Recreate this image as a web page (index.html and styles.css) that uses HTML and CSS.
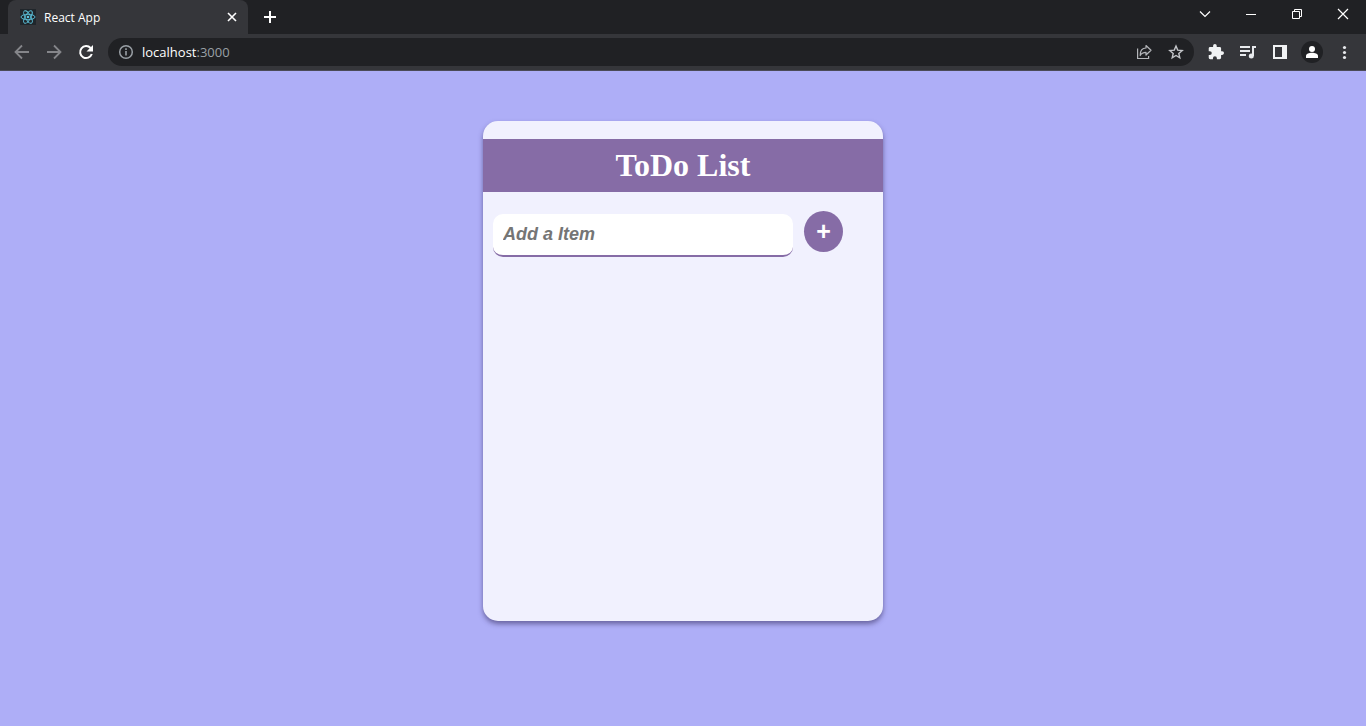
FILE: index.html
```html
<!DOCTYPE html>
<html lang="en">
<head>
<meta charset="utf-8">
<title>React App</title>
<link rel="stylesheet" href="styles.css">
</head>
<body>
<header class="browser">
  <div class="tab-strip">
    <div class="tab">
      <svg class="favicon" width="16" height="16" viewBox="0 0 16 16" fill="none" stroke="#5cc3dc" stroke-width=".9">
        <rect width="16" height="16" fill="#20262b" stroke="none"/>
        <ellipse cx="8" cy="8" rx="7" ry="2.7"/>
        <ellipse cx="8" cy="8" rx="7" ry="2.7" transform="rotate(60 8 8)"/>
        <ellipse cx="8" cy="8" rx="7" ry="2.7" transform="rotate(120 8 8)"/>
        <circle cx="8" cy="8" r="1.3" fill="#5cc3dc" stroke="none"/>
      </svg>
      <span class="tab-title">React App</span>
      <button class="tab-close" aria-label="Close tab"><svg width="16" height="16" viewBox="0 0 16 16" stroke="#fff" stroke-width="1.6"><path d="M4 4l8 8M12 4l-8 8"/></svg></button>
    </div>
    <button class="new-tab" aria-label="New tab"><svg width="16" height="16" viewBox="0 0 16 16" stroke="#fff" stroke-width="2"><path d="M2 8h12M8 2v12"/></svg></button>
    <div class="window-controls">
      <button class="window-button" aria-label="Search tabs"><svg width="12" height="12" viewBox="0 0 12 12" fill="none" stroke="#fff" stroke-width="1.200"><path d="M1 3.500l5 5 5-5"/></svg></button>
      <button class="window-button" aria-label="Minimize"><svg width="12" height="12" viewBox="0 0 12 12" stroke="#fff"><path d="M1 6.500h10"/></svg></button>
      <button class="window-button" aria-label="Restore"><svg width="12" height="12" viewBox="0 0 12 12" fill="none" stroke="#fff"><path d="M1.500 3.500h7v7h-7zM3.500 3.500v-2h7v7h-2"/></svg></button>
      <button class="window-button" aria-label="Close window"><svg width="12" height="12" viewBox="0 0 12 12" stroke="#fff" stroke-width="1.200"><path d="M1 1l10 10M11 1L1 11"/></svg></button>
    </div>
  </div>
  <div class="toolbar">
    <button class="tool" aria-label="Back"><svg width="16" height="16" viewBox="0 0 16 16" fill="none" stroke="#85868a" stroke-width="1.800"><path d="M15 8H2M8 1.500L1.500 8 8 14.500"/></svg></button>
    <button class="tool" aria-label="Forward"><svg width="16" height="16" viewBox="0 0 16 16" fill="none" stroke="#85868a" stroke-width="1.800"><path d="M1 8h13M8 1.500L14.500 8 8 14.500"/></svg></button>
    <button class="tool" aria-label="Reload"><svg width="16" height="16" viewBox="0 0 16 16" fill="none" stroke="#fff" stroke-width="2"><path d="M13.800 10A6 6 0 1 1 12.600 4"/><path d="M15 1v6.500H8.500z" fill="#fff" stroke="none"/></svg></button>
    <div class="address-bar">
      <svg width="16" height="16" viewBox="0 0 16 16" fill="none" stroke="#9aa0a6" stroke-width="1.500"><circle cx="8" cy="8" r="6.300"/><path d="M8 7v4.500M8 4.300v1.600" stroke-width="1.600"/></svg>
      <span class="address"><span class="host">localhost</span>:3000</span>
      <button class="tool" aria-label="Share"><svg width="16" height="16" viewBox="0 0 16 16" fill="none" stroke="#b4b6ba" stroke-width="1.200"><path d="M1.600 4.500v10h11v-2.500"/><path d="M4.200 11.500c-.2-5 2-7.500 5.800-7.500V1.500l5 4.800-5 4.700V8.300c-2.800 0-4.600.8-5.800 3.200z" stroke-linejoin="round"/></svg></button>
      <button class="tool" aria-label="Bookmark"><svg width="16" height="16" viewBox="0 0 16 16" fill="none" stroke="#c4c6ca" stroke-width="1.400"><path d="M8 2l1.700 4.100 4.500.4-3.400 2.900 1 4.400L8 11.500l-3.800 2.300 1-4.400-3.400-2.900 4.500-.4z"/></svg></button>
    </div>
    <button class="tool" aria-label="Extensions"><svg width="16" height="16" viewBox="1 1 22 22" fill="#f1f3f4"><path d="M20.500 11H19V7a2 2 0 0 0-2-2h-4V3.500a2.500 2.500 0 0 0-5 0V5H4a2 2 0 0 0-2 2v3.800h1.500a2.700 2.700 0 0 1 0 5.400H2V20a2 2 0 0 0 2 2h3.800v-1.500a2.700 2.700 0 0 1 5.400 0V22H17a2 2 0 0 0 2-2v-4h1.500a2.500 2.500 0 0 0 0-5z"/></svg></button>
    <button class="tool" aria-label="Media"><svg width="16" height="16" viewBox="0 0 16 16" fill="none" stroke="#e8eaed" stroke-width="2"><path d="M0 3h10M0 7h10M0 11h6"/><path d="M13 12V3h3"/><circle cx="11.300" cy="12" r="2.500" fill="#e8eaed" stroke="none"/></svg></button>
    <button class="tool" aria-label="Side panel"><svg width="16" height="16" viewBox="0 0 16 16"><path fill="#f1f3f4" fill-rule="evenodd" d="M1 1h14v14H1zM3 3v10h7V3z"/></svg></button>
    <button class="tool" aria-label="Profile"><svg width="22" height="22" viewBox="0 0 22 22" fill="#fff"><circle cx="11" cy="11" r="11" fill="#202124"/><circle cx="11" cy="8" r="3"/><path d="M5 17v-2c0-2 3-3.200 6-3.200s6 1.200 6 3.200v2z"/></svg></button>
    <button class="tool" aria-label="Menu"><svg width="16" height="16" viewBox="0 0 16 16" fill="#e8eaed"><circle cx="8.500" cy="3.500" r="1.600"/><circle cx="8.500" cy="8.500" r="1.600"/><circle cx="8.500" cy="13.500" r="1.600"/></svg></button>
  </div>
</header>
<main class="page">
  <section class="card">
    <h1 class="card-title">ToDo List</h1>
    <form class="add-form">
      <input class="item-input" type="text" placeholder="Add a Item" aria-label="Add a Item">
      <button class="add-button" type="button">+</button>
    </form>
  </section>
</main>
</body>
</html>
```
FILE: styles.css
```css
* { box-sizing: border-box; }

body {
  margin: 0;
  min-height: 100vh;
  display: flex;
  flex-direction: column;
  background: #aeaef7;
}

button {
  display: flex;
  align-items: center;
  justify-content: center;
  padding: 0;
  border: 0;
  background: none;
}

.browser {
  background: #35363a;
  border-bottom: 1px solid #4b4a57;
  font-family: "Open Sans", "Noto Sans", sans-serif;
  color: #fff;
}

.tab-strip {
  display: flex;
  height: 34px;
  padding-left: 8px;
  background: #202124;
}

.tab {
  display: flex;
  align-items: center;
  gap: 8px;
  width: 240px;
  padding: 0 8px 0 12px;
  border-radius: 8px 8px 0 0;
  background: #35363a;
  font-size: 12px;
}

.tab-title { flex: 1; }

.new-tab { width: 44px; }

.window-controls {
  display: flex;
  height: 28px;
  margin-left: auto;
}

.window-button { width: 46px; }

.toolbar {
  display: flex;
  align-items: center;
  height: 36px;
  padding: 0 6px;
}

.tool {
  width: 32px;
  height: 28px;
}

.address-bar {
  display: flex;
  flex: 1;
  align-items: center;
  height: 28px;
  margin: 0 6px;
  padding: 0 2px 0 10px;
  border-radius: 14px;
  background: #202124;
}

.address {
  flex: 1;
  padding-left: 8px;
  font-size: 13px;
  color: #9aa0a6;
}

.host { color: #fff; }

.page {
  display: flex;
  flex: 1;
  justify-content: center;
  align-items: flex-start;
  padding: 50px 16px;
}

.card {
  width: 400px;
  min-height: 500px;
  padding-top: 18px;
  border-radius: 15px;
  background: #f1f1fe;
  box-shadow: 0 3px 5px rgba(50, 40, 90, 0.55);
}

.card-title {
  margin: 0;
  padding: 8px 0;
  background: #866ca6;
  color: #fff;
  font: bold 32px/37px "Liberation Serif", serif;
  text-align: center;
}

.add-form {
  display: flex;
  align-items: flex-start;
  gap: 11px;
  padding: 19px 10px;
}

.item-input {
  width: 300px;
  height: 43px;
  margin-top: 3px;
  padding: 0 10px;
  border: 0;
  border-bottom: 2px solid #866ca6;
  border-radius: 10px;
  background: #fff;
  font: italic bold 18px "Liberation Sans", sans-serif;
}

.item-input::placeholder { color: #757575; }

.add-button {
  width: 39px;
  height: 41px;
  border-radius: 50%;
  background: #866ca6;
  color: #fff;
  font: bold 25px "Liberation Sans", sans-serif;
}
```
